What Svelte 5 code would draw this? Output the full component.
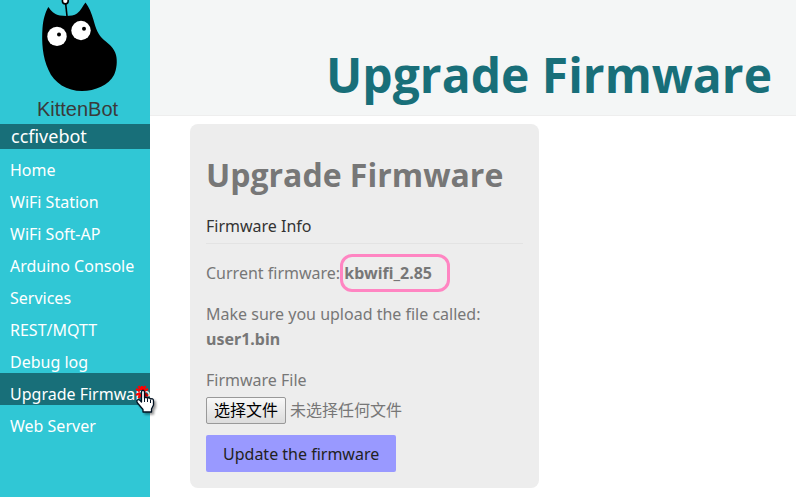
<script>
  const links = [
    'Home',
    'WiFi Station',
    'WiFi Soft-AP',
    'Arduino Console',
    'Services',
    'REST/MQTT',
    'Debug log',
    'Upgrade Firmware',
    'Web Server'
  ];
  const current = 'Upgrade Firmware';
</script>

<div class="layout">
  <aside>
    <div class="logo">
      <svg width="150" height="96" viewBox="0 0 150 96" aria-hidden="true">
        <path d="M65.5 2L67.2 18" stroke="#000" stroke-width="1.6" />
        <circle cx="65.3" cy="1" r="2.9" fill="#fff" stroke="#000" stroke-width="1.6" />
        <path d="M48.3 7C51 10.500 54 14.500 60 15.500C66 16.400 73 16.200 77 13.500C81 10.500 83 5.500 85.500 2.500C89 7 91.500 13 93.500 20C96 29 98 35 104 40C110 45 114 48 116 55C117.500 61 116.800 69 114 75C109 85 95 91 82 91C67 91 54 83 48.500 70C42.500 57 41.500 42 42.500 28C43.300 19 45 13 48.300 7Z" />
        <g fill="#fff">
          <circle cx="57" cy="36.400" r="9.700" />
          <circle cx="81" cy="30.500" r="9.700" />
        </g>
        <circle cx="59" cy="34.600" r="2" />
        <circle cx="84" cy="28.800" r="2" />
      </svg>
      <span>KittenBot</span>
    </div>
    <div class="brand">ccfivebot</div>
    <nav>
      {#each links as link}
        <a href="#top" class:active={link === current} aria-current={link === current ? 'page' : undefined}>{link}</a>
      {/each}
      <svg class="pointer" width="30" height="32" viewBox="0 0 30 32" aria-hidden="true">
        <path d="M10 1V5M10 9V13M4 4L8 6M12 8L16 11M4 10L8 8M12 6L16 4M6.500 1L9 5M11 9L13 12.500M13.500 1L11 5M9 9L6.500 13" stroke="#f00" stroke-width="2.300" />
        <path class="hand" d="M9.500 6.500Q11 4 12.500 6.500V13Q14 11.500 15.500 13.200Q17 12 18.500 14Q21.500 13 21.500 16V20L19.500 24V27H11V24.500L5.500 18Q4 15.500 6 14.700Q7.500 14.300 9.500 17Z" fill="#fff" stroke="#001020" stroke-width="1.300" stroke-linejoin="round" />
        <path d="M12.500 13V17M15.500 14V17M18.500 15V18" stroke="#001020" />
      </svg>
    </nav>
  </aside>

  <main>
    <header><h1>Upgrade Firmware</h1></header>
    <form class="card">
      <h2>Upgrade Firmware</h2>
      <fieldset>
        <legend>Firmware Info</legend>
        <p>Current firmware: <b class="version">kbwifi_2.85</b></p>
        <p>Make sure you upload the file called: <b>user1.bin</b></p>
        <label for="firmware">Firmware File</label>
        <div class="file">
          <input id="firmware" type="file" />
          <label class="choose" for="firmware">选择文件</label>
          <span>未选择任何文件</span>
        </div>
        <button type="button">Update the firmware</button>
      </fieldset>
    </form>
  </main>
</div>

<style>
  :global(body) {
    margin: 0;
    background: #fff;
    overflow: hidden;
  }
  .layout {
    display: flex;
    min-height: 100vh;
    font: 16px/25px "Noto Sans", "Noto Sans CJK SC", sans-serif;
    color: #777;
  }
  aside {
    flex: 0 0 150px;
    min-width: 0;
    background: #30c7d5;
    color: #fff;
  }
  .logo {
    display: flex;
    flex-direction: column;
    align-items: center;
    height: 124px;
    font: 20px/26px "Liberation Sans", sans-serif;
    color: #3a3a3a;
  }
  .logo span {
    padding-left: 5px;
  }
  .brand {
    padding: 0 11px;
    background: #186f79;
    font-size: 18px;
  }
  nav {
    position: relative;
  }
  nav a {
    display: block;
    padding: 10px 0 0 10px;
    line-height: 22px;
    color: #fff;
    text-decoration: none;
    white-space: nowrap;
    overflow: hidden;
  }
  nav a.active {
    background: #186f79;
  }
  .pointer {
    position: absolute;
    left: 132px;
    top: 236px;
    fill: none;
    overflow: visible;
  }
  .hand {
    filter: drop-shadow(2px 2px 1px rgb(0 0 0 / 0.4));
  }
  main {
    flex: 1;
    min-width: 0;
  }
  header {
    padding: 38px 24px 4px;
    background: #f4f6f6;
    border-bottom: 1px solid #eee;
    text-align: right;
  }
  h1,
  h2 {
    font-family: "Open Sans", sans-serif;
    white-space: nowrap;
  }
  h1 {
    margin: 0;
    font-size: 48px;
    line-height: 73px;
    color: #186f79;
  }
  .card {
    box-sizing: border-box;
    width: fit-content;
    max-width: 349px;
    margin: 8px 40px;
    padding: 16px;
    border-radius: 8px;
    background: #ededed;
  }
  h2 {
    margin: 12px 0 16px;
    font-size: 32px;
    line-height: 46px;
  }
  fieldset {
    min-width: 0;
    margin: 0;
    padding: 0;
    border: 0;
  }
  legend {
    box-sizing: border-box;
    width: 100%;
    margin-bottom: 1px;
    padding: 0 0 4px;
    border-bottom: 1px solid #e3e3e3;
    color: #333;
  }
  p {
    margin: 16px 0;
  }
  .version {
    position: relative;
  }
  .version::after {
    content: "";
    position: absolute;
    inset: -8px -18px -8px -4px;
    border: 3px solid #ff85c2;
    border-radius: 12px;
  }
  .file {
    position: relative;
    display: flex;
    align-items: center;
    gap: 4px;
    margin: 4px 0 11px;
  }
  .file input {
    position: absolute;
    width: 1px;
    height: 1px;
    opacity: 0;
  }
  .choose {
    padding: 0 7px;
    border: 1px solid #999;
    border-radius: 2px;
    background: linear-gradient(#f8f8f8, #dcdcdc);
    color: #000;
  }
  button {
    padding: 7px 17px 5px;
    border: 0;
    border-radius: 2px;
    background: #9999ff;
    color: #222;
    font: inherit;
  }
</style>
